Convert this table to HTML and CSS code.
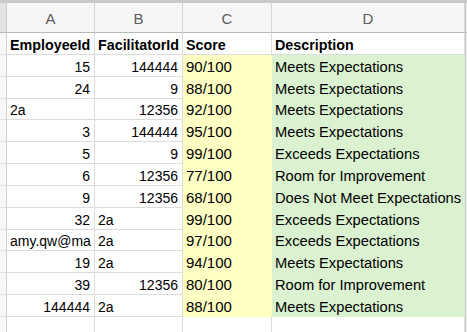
FILE: index.html
```html
<!DOCTYPE html>
<html>
<head>
<meta charset="utf-8">
<link rel="stylesheet" href="styles.css">
</head>
<body>
<div class="sheet">
  <div class="corner"></div>
  <div class="colhead">A</div>
  <div class="colhead">B</div>
  <div class="colhead">C</div>
  <div class="colhead">D</div>
  <div class="edge head-edge"></div>

  <div class="rowhead"></div>
  <div class="cell bold">EmployeeId</div>
  <div class="cell bold">FacilitatorId</div>
  <div class="cell bold">Score</div>
  <div class="cell bold">Description</div>
  <div class="edge"></div>

  <div class="rowhead"></div><div class="cell num">15</div><div class="cell num">144444</div><div class="cell score">90/100</div><div class="cell desc">Meets Expectations</div><div class="edge"></div>
  <div class="rowhead"></div><div class="cell num">24</div><div class="cell num">9</div><div class="cell score">88/100</div><div class="cell desc">Meets Expectations</div><div class="edge"></div>
  <div class="rowhead"></div><div class="cell">2a</div><div class="cell num">12356</div><div class="cell score">92/100</div><div class="cell desc">Meets Expectations</div><div class="edge"></div>
  <div class="rowhead"></div><div class="cell num">3</div><div class="cell num">144444</div><div class="cell score">95/100</div><div class="cell desc">Meets Expectations</div><div class="edge"></div>
  <div class="rowhead"></div><div class="cell num">5</div><div class="cell num">9</div><div class="cell score">99/100</div><div class="cell desc">Exceeds Expectations</div><div class="edge"></div>
  <div class="rowhead"></div><div class="cell num">6</div><div class="cell num">12356</div><div class="cell score">77/100</div><div class="cell desc">Room for Improvement</div><div class="edge"></div>
  <div class="rowhead"></div><div class="cell num">9</div><div class="cell num">12356</div><div class="cell score">68/100</div><div class="cell desc">Does Not Meet Expectations</div><div class="edge"></div>
  <div class="rowhead"></div><div class="cell num">32</div><div class="cell">2a</div><div class="cell score">99/100</div><div class="cell desc">Exceeds Expectations</div><div class="edge"></div>
  <div class="rowhead"></div><div class="cell">amy.qw@ma</div><div class="cell">2a</div><div class="cell score">97/100</div><div class="cell desc">Exceeds Expectations</div><div class="edge"></div>
  <div class="rowhead"></div><div class="cell num">19</div><div class="cell">2a</div><div class="cell score">94/100</div><div class="cell desc">Meets Expectations</div><div class="edge"></div>
  <div class="rowhead"></div><div class="cell num">39</div><div class="cell num">12356</div><div class="cell score">80/100</div><div class="cell desc">Room for Improvement</div><div class="edge"></div>
  <div class="rowhead"></div><div class="cell num">144444</div><div class="cell">2a</div><div class="cell score">88/100</div><div class="cell desc">Meets Expectations</div><div class="edge"></div>

  <div class="rowhead"></div><div class="cell"></div><div class="cell"></div><div class="cell"></div><div class="cell"></div><div class="edge"></div>
</div>
</body>
</html>
```
FILE: styles.css
```css
html, body {
  margin: 0;
  padding: 0;
  background: #ffffff;
  overflow: hidden;
}

.sheet {
  display: grid;
  grid-template-columns: 7px 88px 88px 89px 193px 2px;
  grid-template-rows: 30px;
  grid-auto-rows: 21.85px;
  border-top: 3px solid #c9c9c9;
  font-family: "Liberation Sans", Arial, sans-serif;
  color: #000;
}

.corner {
  background: #e3e3e3;
  border-right: 1px solid #cfcfcf;
  border-bottom: 1px solid #b9b9b9;
}

.colhead {
  background: #f6f6f6;
  border-right: 1px solid #d6d6d6;
  border-bottom: 1px solid #b9b9b9;
  display: flex;
  align-items: center;
  justify-content: center;
  font-size: 15px;
  color: #5e5e5e;
  padding-top: 1px;
}

.head-edge {
  background: #f6f6f6;
  border-bottom: 1px solid #b9b9b9;
}

.edge {
  background: #f2f2f2;
  border-left: 1px solid #c8c8c8;
}

.rowhead {
  background: #f7f7f7;
  border-right: 1px solid #cfcfcf;
  border-bottom: 1px solid #e2e2e2;
}

.cell {
  border-right: 1px solid #dcdcdc;
  border-bottom: 1px solid #dcdcdc;
  display: flex;
  align-items: flex-end;
  padding: 0 4px 1px 3px;
  font-size: 14px;
  white-space: nowrap;
  overflow: hidden;
  min-width: 0;
}

.num {
  justify-content: flex-end;
}

.bold {
  font-weight: bold;
  font-size: 14.3px;
}

.score {
  background: #ffffc3;
  border-color: #ffffc3;
  font-size: 15px;
}

.desc {
  background: #daf2d0;
  border-color: #daf2d0;
  font-size: 14.7px;
}
```
